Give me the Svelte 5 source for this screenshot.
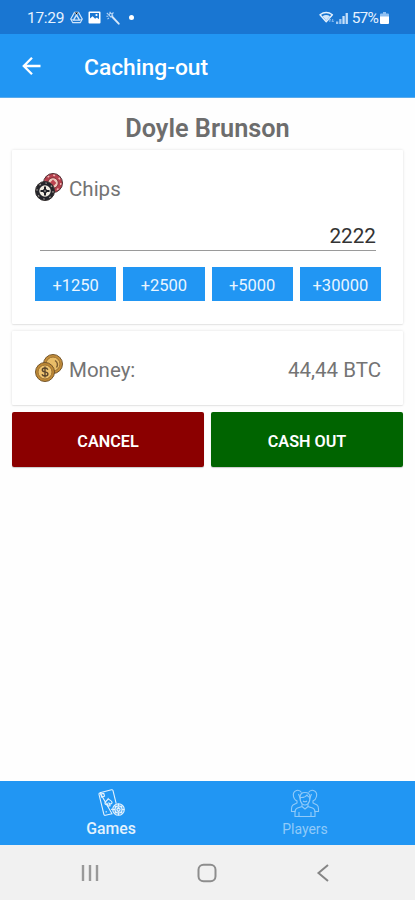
<script>
	const increments = [1250, 2500, 5000, 30000];

	let playerName = $state('Doyle Brunson');
	let chips = $state(2222);
	let money = $derived((chips / 50).toFixed(2).replace('.', ','));
	let activeTab = $state('games');
</script>

<div class="screen">
	<div class="status-bar">
		<span class="clock">17:29</span>
		<svg class="status-drive" viewBox="0 0 14 14" width="13" height="13">
			<path d="M4.8 1.5h4.4l4 7.2-2 3.8H2.8l-2-3.8z" fill="none" stroke="#cfe5fb" stroke-width="1.2" stroke-linejoin="round" />
			<path d="M7 4.2l3.2 5.6H3.8z" fill="none" stroke="#cfe5fb" stroke-width="1.5" />
			<path d="M4.8 1.5L7 4.2l2.2-2.7M.8 8.7l3 1.1M13.2 8.7l-3 1.1" stroke="#cfe5fb" stroke-width=".9" />
		</svg>
		<svg class="status-image" viewBox="0 0 13 13" width="13" height="13">
			<path fill="#fff" fill-rule="evenodd" d="M1.5.5h10a1 1 0 0 1 1 1v10a1 1 0 0 1-1 1h-10a1 1 0 0 1-1-1v-10a1 1 0 0 1 1-1zM2 2v5.5l2.6-2.2 2.5 2.4 1.7-1.3L11 8.3V2z" />
			<circle cx="8.5" cy="4" r="1.1" fill="#fff" />
		</svg>
		<svg class="status-wand" viewBox="0 0 14 14" width="14" height="14">
			<path d="M6 5.500l6.700 7.200" stroke="#d5e7fa" stroke-width="1.900" stroke-linecap="round" />
			<path d="M4 .8v1.700M.8 2l1.500 1.300M.4 5.300h1.900M7.500 1.500L6 3M1.500 8.200l1.500-1.400M2.800 3.800L4.800 6l1.900-1.800L4.700 2z" fill="none" stroke="#b4d4f6" stroke-width="1.100" />
		</svg>
		<span class="status-dot"></span>
		<span class="spacer"></span>
		<svg viewBox="0 0 16 13" width="16" height="13">
			<path d="M1 3.7Q7.2-.8 13.4 3.7L7.2 10.800z" fill="none" stroke="#e4f1fe" stroke-width="1.400" stroke-linejoin="round" />
			<path d="M3.400 5.300Q7.200 2.800 11 5.300L7.200 9.500z" fill="#d3e7fb" />
			<path d="M10.800 11V8M9.600 9.200L10.800 8 12 9.200M13.700 8v3M12.500 9.800l1.200 1.200 1.200-1.200" fill="none" stroke="#84b8f0" stroke-width="1" />
		</svg>
		<svg class="status-signal" viewBox="0 0 12 12" width="12" height="12">
			<path d="M0 9.500h2.300V12H0zM3.200 7h2.300v5H3.200z" fill="#9fc9f5" />
			<path d="M6.400 4h2.300v8H6.400zM9.600 1h2.300v11H9.600z" fill="#c5dff9" />
		</svg>
		<span class="battery-level">57%</span>
		<svg class="status-battery" viewBox="0 0 9 12" width="9" height="12">
			<path d="M3 0h3v1.500h2q1 0 1 1V5H0V2.500q0-1 1-1h2z" fill="#8fc0f3" />
			<path d="M0 4.500h9V11q0 1-1 1H1q-1 0-1-1z" fill="#fff" />
		</svg>
	</div>

	<header class="app-bar">
		<button type="button" class="back-btn" aria-label="Back">
			<svg viewBox="0 0 20 20" width="20" height="20">
				<path d="M18.500 10H2.200M10 1.800L1.800 10l8.200 8.200" fill="none" stroke="#fff" stroke-width="2.300" />
			</svg>
		</button>
		<h1>Caching-out</h1>
	</header>

	<main>
		<h2>{playerName}</h2>

		<section class="card chips-card">
			<div class="card-row">
				<svg viewBox="0 0 28 28" width="28" height="28">
					<circle cx="18" cy="10" r="9.500" fill="#b6404d" stroke="#4b2c30" />
					<circle cx="18" cy="10" r="7.800" fill="none" stroke="#efb7b5" stroke-width="1.400" stroke-dasharray="2 4.120" />
					<circle cx="18" cy="10" r="5.300" fill="#efc9bd" stroke="#81333b" />
					<path d="M18 6.500l3.300 3.500-3.300 3.500-3.300-3.500z" fill="#bd4450" />
					<circle cx="10" cy="18" r="9.500" fill="#25252a" stroke="#332e2d" />
					<circle cx="10" cy="18" r="8" fill="none" stroke="#9c9691" stroke-width="1.200" stroke-dasharray="1.800 4.480" />
					<circle cx="10" cy="18" r="5.700" fill="#f2ede2" />
					<path d="M10 13.500v9M5.500 18h9" stroke="#202025" stroke-width="2" />
					<circle cx="10" cy="18" r="2.200" fill="#202025" />
					<circle cx="10" cy="18" r=".7" fill="#f2ede2" />
				</svg>
				<span class="label">Chips</span>
			</div>
			<input type="text" bind:value={chips} aria-label="Chips" />
			<div class="increments">
				{#each increments as amount}
					<button type="button" onclick={() => (chips = Number(chips) + amount)}>+{amount}</button>
				{/each}
			</div>
		</section>

		<section class="card card-row money-card">
			<svg viewBox="0 0 28 28" width="28" height="28">
				<circle cx="18" cy="10" r="9.500" fill="#c58f3b" stroke="#73552c" />
				<circle cx="18" cy="10" r="7" fill="#e9bd68" stroke="#9b7033" />
				<path d="M20 6.500q4 3 1.500 7" fill="none" stroke="#7d5c31" stroke-width="1.400" />
				<circle cx="10" cy="18" r="9.500" fill="#c18a35" stroke="#73552c" />
				<circle cx="10" cy="18" r="7" fill="#efc470" stroke="#9b7033" />
				<path d="M12.800 15.700q-.6-1.700-2.800-1.700-2.700 0-2.700 1.900 0 1.500 2.700 2 2.900.5 2.900 2.200 0 2-2.900 2-2.400 0-3-1.800M10 12.500v11" fill="none" stroke="#5b462c" stroke-width="1.400" />
			</svg>
			<span class="label">Money:</span>
			<span class="label amount">{money} BTC</span>
		</section>

		<div class="actions">
			<button type="button" class="cancel">CANCEL</button>
			<button type="button" class="cash-out">CASH OUT</button>
		</div>
	</main>

	<nav class="tabs">
		<button type="button" class:active={activeTab === 'games'} onclick={() => (activeTab = 'games')}>
			<svg viewBox="0 0 30 30" width="30" height="30" fill="none" stroke="currentColor" stroke-width="1.100">
				<path d="M4 4.700l11.500-2.900q1.200-.3 1.500.9l3.200 13M16 25.800l-6.500 1.500q-1.300.3-1.600-1L3 6.500q-.3-1.500 1-1.800z" />
				<path d="M5.500 9l-.7-3 3-.6.7 2.800zM15 21.500l1.500-.4M9.500 24l1.500-.3" />
				<path d="M12.200 10.700c1 1.500 3.500 1.700 3.800 3.500.2 1.500-1.500 2.200-2.600 1.300l.7 2.300-2 .4-.3-2.300c-.7 1.200-2.800 1-2.900-.6-.1-1.800 2.600-2.800 3.300-4.600z" />
				<circle cx="22.500" cy="21.500" r="5.800" fill="#90caf9" fill-opacity=".5" />
				<circle cx="22.500" cy="21.500" r="3.500" />
				<path d="M22.500 15.700v2.300M22.500 25v2.300M16.700 21.500H19M26 21.500h2.300M18.400 17.400l1.600 1.600M26.600 17.400L25 19M18.400 25.600L20 24M26.600 25.600L25 24M22.500 19.300l1.600 2.200-1.600 2.200-1.600-2.200z" />
			</svg>
			<span>Games</span>
		</button>
		<button type="button" class:active={activeTab === 'players'} onclick={() => (activeTab = 'players')}>
			<svg viewBox="0 0 30 30" width="30" height="30" fill="none" stroke="currentColor" stroke-width="1.100">
				<path d="M11.500 4.500Q9.500 1.500 6.500 2.500 2.500 4 3.500 8.500q.8 3.500 3.500 4.500v2L3 17q-1.500 1-1.500 4v2.500h4" />
				<path d="M18.500 4.500q2-3 5-2 4 1.500 3 6-.8 3.500-3.500 4.500v2l4 2q1.500 1 1.500 4v2.500h-4" />
				<path d="M10 9.500q0-5 5-5t5 5q0 4.500-2.300 6.500-2.700 2-5.400 0Q10 14 10 9.500z" />
				<path d="M10 9.500q5 .5 7-2.500 1 2 3 2.500M12 16.200v2.300L7.500 20Q5 21 5 24v4.500h20V24q0-3-2.500-4L18 18.500v-2.300M12 18.500l3 2.500 3-2.500M9 24v4.500M21 24v4.500M8.500 6l2 5M21.500 6l-2 5M13 13q2 1.500 4 0" />
			</svg>
			<span>Players</span>
		</button>
	</nav>

	<div class="system-nav">
		<svg viewBox="0 0 20 20" width="20" height="20">
			<path d="M3 2v16M10 2v16M17 2v16" stroke="#999" stroke-width="2.400" />
		</svg>
		<svg viewBox="0 0 20 20" width="20" height="20">
			<rect x="1.500" y="1.800" width="17" height="16.500" rx="5" fill="none" stroke="#8d8d8d" stroke-width="2" />
		</svg>
		<svg viewBox="0 0 20 20" width="20" height="20">
			<path d="M15 2L5.500 10l9.500 8" fill="none" stroke="#858585" stroke-width="2" />
		</svg>
	</div>
</div>

<style>
	:global(body) {
		margin: 0;
	}

	.screen {
		display: flex;
		flex-direction: column;
		width: 415px;
		height: 900px;
		background: #fefefe;
		font-family: Roboto, sans-serif;
		color: #747474;
	}

	svg {
		display: block;
		flex: none;
	}

	button {
		border: none;
		padding: 0;
		font-family: inherit;
		cursor: pointer;
	}

	.status-bar {
		display: flex;
		align-items: center;
		box-sizing: border-box;
		height: 34px;
		padding: 1px 26px 0 27px;
		background: #1976d2;
		color: #e6f2ff;
		font-size: 15.5px;
	}

	.clock {
		width: 43px;
		letter-spacing: -0.3px;
	}

	.status-image {
		margin-left: 5px;
	}

	.status-wand {
		margin-left: 5px;
	}

	.status-dot {
		width: 5px;
		height: 5px;
		margin-left: 9px;
		border-radius: 50%;
		background: white;
	}

	.spacer {
		flex: 1;
	}

	.status-signal {
		margin-left: 1px;
	}

	.battery-level {
		margin-left: 4px;
		letter-spacing: -0.8px;
	}

	.status-battery {
		margin-left: 2px;
	}

	.app-bar {
		display: flex;
		align-items: center;
		box-sizing: border-box;
		height: 64px;
		padding: 1px 22px;
		background: #2196f3;
		border-bottom: 1px solid #5aabec;
	}

	.back-btn {
		width: 62px;
		background: none;
	}

	h1 {
		margin: 0;
		padding-top: 3px;
		color: white;
		font-size: 22.8px;
		font-weight: 500;
	}

	main {
		flex: 1;
		padding: 0 12px;
	}

	h2 {
		margin: 0;
		height: 52px;
		padding-top: 9px;
		box-sizing: border-box;
		line-height: 44px;
		font-size: 25.3px;
		font-weight: 600;
		text-align: center;
		color: #6d6d6d;
	}

	.card {
		box-sizing: border-box;
		margin-bottom: 7px;
		padding: 0 22px 0 23px;
		background: white;
		box-shadow: 0 0 3px rgba(0, 0, 0, 0.12), 0 1px 1px rgba(0, 0, 0, 0.06);
		border-radius: 1px;
	}

	.card-row {
		display: flex;
		align-items: center;
		gap: 6px;
		font-size: 20.5px;
	}

	.label {
		padding-top: 3px;
	}

	.chips-card {
		height: 174px;
		padding-top: 23px;
	}

	.chips-card input {
		display: block;
		box-sizing: border-box;
		width: 336px;
		height: 32px;
		margin: 18px 5px 16px;
		padding: 2px 0 0;
		border: none;
		border-bottom: 1px solid #9a9a9a;
		background: none;
		font-family: inherit;
		font-size: 20.700px;
		text-align: right;
		color: #333;
		outline: none;
	}

	.increments {
		display: grid;
		grid-template-columns: repeat(4, 1fr);
		gap: 7px;
	}

	.increments button {
		height: 34px;
		padding-top: 2px;
		background: #2196f3;
		color: #e9f5ff;
		font-size: 16.5px;
	}

	.money-card {
		height: 74px;
	}

	.amount {
		margin-left: auto;
	}

	.actions {
		display: grid;
		grid-template-columns: 1fr 1fr;
		gap: 7px;
	}

	.actions button {
		height: 55px;
		padding-top: 3px;
		border-radius: 2px;
		color: white;
		font-size: 16.2px;
		font-weight: 600;
		box-shadow: 0 1px 1px rgba(0, 0, 0, 0.2);
	}

	.cancel {
		background: #8b0000;
	}

	.cash-out {
		background: #006400;
	}

	.tabs {
		display: grid;
		grid-template-columns: 1fr 1fr;
		height: 64px;
		padding: 0 13px 0 14px;
		background: #2196f3;
	}

	.tabs button {
		display: flex;
		flex-direction: column;
		align-items: center;
		padding-top: 7px;
		background: none;
		color: #90caf9;
		font-size: 14px;
		line-height: 22px;
	}

	.tabs button.active {
		color: #e3f2fd;
		font-size: 15.8px;
		font-weight: 500;
	}

	.system-nav {
		display: flex;
		align-items: center;
		justify-content: space-between;
		box-sizing: border-box;
		height: 55px;
		padding: 1px 82px 0 80px;
		background: #f1f1f1;
	}
</style>
